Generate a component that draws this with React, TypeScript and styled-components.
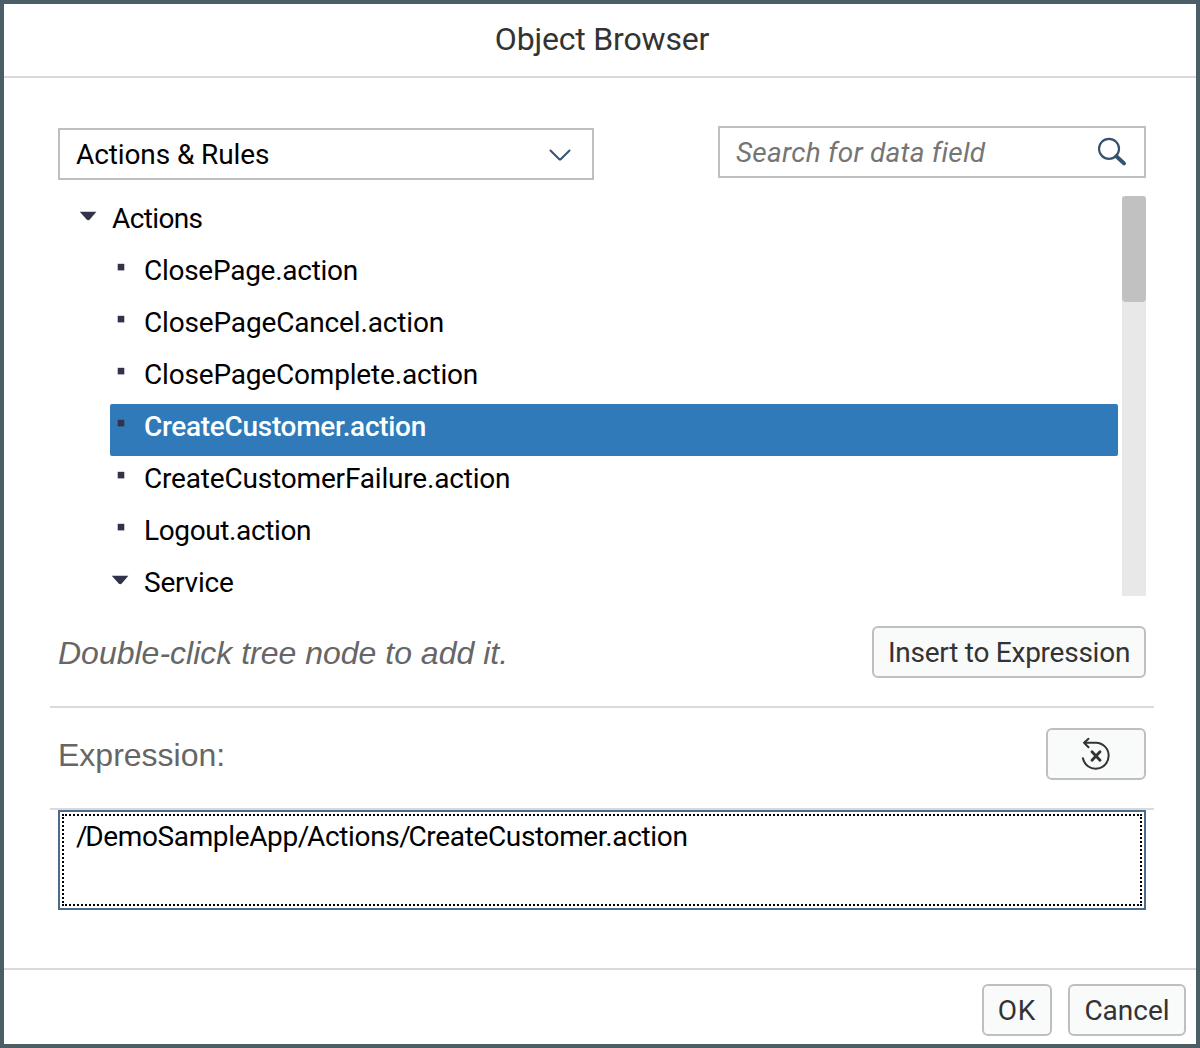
import React from "react";
import styled, { createGlobalStyle } from "styled-components";

const GlobalStyle = createGlobalStyle`
  * { box-sizing: border-box; }
  body { margin: 0; background: #fff; font-family: Roboto, "Noto Sans", sans-serif; }
`;

const Dialog = styled.div`
  width: 1200px;
  height: 1048px;
  border: 4px solid #4b5e66;
  background: #fff;
  display: flex;
  flex-direction: column;
  overflow: hidden;
`;

const Label = styled.span<{ $track?: number }>`
  white-space: pre;
  letter-spacing: ${(p) => p.$track ?? 0}px;
`;

const Header = styled.header`
  height: 74px;
  flex: none;
  border-bottom: 2px solid #d9d9d9;
  display: flex;
  justify-content: center;
  padding: 15px 0 0 4px;
  font-size: 32px;
  line-height: 40px;
  color: #333;
`;

const Body = styled.main`
  height: 890px;
  flex: none;
  padding: 48px 42px 0 46px;
  display: flex;
  flex-direction: column;
`;

const FilterRow = styled.div`
  display: flex;
  justify-content: space-between;
  align-items: flex-start;
  height: 70px;
  padding: 0 8px;
`;

const Field = styled.div<{ $width: number; $drop?: number; $end: number }>`
  width: ${(p) => p.$width}px;
  height: 52px;
  margin-top: ${(p) => p.$drop ?? 0}px;
  border: 2px solid #bfbfbf;
  display: flex;
  justify-content: space-between;
  padding: 0 ${(p) => p.$end}px 0 16px;
  font-size: 28px;
  line-height: 50px;
  color: #000;
`;

const Placeholder = styled(Label)`
  font-style: italic;
  color: #757575;
`;

const TreePane = styled.div`
  height: 400px;
  margin: 0 8px;
  display: flex;
  justify-content: space-between;
`;

const Tree = styled.div`
  width: 1060px;
  height: 400px;
`;

const Row = styled.div<{ $level: number; $selected?: boolean }>`
  height: 52px;
  margin-left: ${(p) => 20 + p.$level * 32}px;
  border-radius: 2px;
  display: flex;
  font-size: 28px;
  line-height: 45px;
  color: ${(p) => (p.$selected ? "#fff" : "#000")};
  font-weight: ${(p) => (p.$selected ? 500 : 400)};
  background: ${(p) => (p.$selected ? "#307aba" : "transparent")};
`;

const Marker = styled.svg`
  width: 34px;
  height: 52px;
  flex: none;
`;

const ScrollTrack = styled.div`
  width: 24px;
  height: 400px;
  background: #e8e8e8;
`;

const ScrollThumb = styled.div`
  height: 106px;
  border-radius: 4px;
  background: #c1c1c1;
`;

const ActionRow = styled.div<{ $height: number; $top: number }>`
  height: ${(p) => p.$height}px;
  flex: none;
  padding: ${(p) => p.$top}px 8px 0;
  border-bottom: 2px solid #d9d9de;
  display: flex;
  justify-content: space-between;
  align-items: flex-start;
`;

const Caption = styled(Label)<{ $italic?: boolean }>`
  font-family: "Liberation Sans", Arial, sans-serif;
  font-size: 32px;
  line-height: 54px;
  font-style: ${(p) => (p.$italic ? "italic" : "normal")};
  color: #666;
`;

const Button = styled.button<{ $width: number }>`
  width: ${(p) => p.$width}px;
  height: 52px;
  padding: 0;
  border: 2px solid #bfbfbf;
  border-radius: 6px;
  background: #f9fafa;
  display: flex;
  justify-content: center;
  font: 28px/50px Roboto, "Noto Sans", sans-serif;
  color: #333;
`;

const Expression = styled.div`
  height: 100px;
  margin: 0 8px;
  border: 2px solid #496b8c;
  padding: 2px;
`;

const FocusRing = styled.div`
  height: 92px;
  border: 2px dotted #000;
  padding: 0 12px;
  font-size: 28px;
  line-height: 42px;
  color: #000;
`;

const Slash = styled.span`
  letter-spacing: -2.4px;
`;

const Footer = styled.footer`
  height: 76px;
  flex: none;
  border-top: 2px solid #d9d9d9;
  display: flex;
  justify-content: flex-end;
  gap: 16px;
  padding: 14px 10px 0 0;
`;

const nodes = [
  { text: "Actions", level: 0, folder: true, track: -0.62 },
  { text: "ClosePage.action", level: 1, track: -0.27 },
  { text: "ClosePageCancel.action", level: 1, track: -0.16 },
  { text: "ClosePageComplete.action", level: 1, track: -0.18 },
  { text: "CreateCustomer.action", level: 1, selected: true, track: -0.3 },
  { text: "CreateCustomerFailure.action", level: 1, track: -0.18 },
  { text: "Logout.action", level: 1, track: -0.38 },
  { text: "Service", level: 1, folder: true, track: -0.2 },
];

const pathParts = ["DemoSampleApp", "Actions", "CreateCustomer.action"];

const NodeMarker = ({ folder }: { folder?: boolean }) => (
  <Marker viewBox="0 0 34 52">
    {folder ? (
      <path d="M1.800 15.800H18.400L12 23.200Q10.200 25.200 8.400 23.200Z" fill="#32324a" />
    ) : (
      <rect x="7.700" y="15.800" width="6.600" height="6.600" fill="#32324a" />
    )}
  </Marker>
);

const ChevronIcon = () => (
  <svg width="24" height="48" viewBox="0 0 24 48" fill="none" stroke="#35536f" strokeWidth="2" strokeLinecap="round" strokeLinejoin="round">
    <path d="M2.500 20.500L11.300 29.200Q12 29.900 12.700 29.200L21.500 20.500" />
  </svg>
);

const SearchIcon = () => (
  <svg width="32" height="48" viewBox="0 0 32 48" fill="none" stroke="#35536f" strokeLinecap="round">
    <circle cx="11" cy="20.800" r="10" strokeWidth="2.200" />
    <path d="M18.300 28.300L26 35.400" strokeWidth="4" />
  </svg>
);

const ResetIcon = () => (
  <svg width="32" height="48" viewBox="0 0 32 48" fill="none" stroke="#333" strokeLinecap="round" strokeLinejoin="round">
    <path d="M4 12.700H16A13 13 0 1 1 2.900 28.200M8.500 8.800L4 12.700L8.500 17.200" strokeWidth="2" />
    <path d="M12 21.800L20 30.200M20 21.800L12 30.200" strokeWidth="2.900" />
  </svg>
);

export default function App() {
  return (
    <>
      <GlobalStyle />
      <Dialog>
        <Header>
          <Label $track={-0.18}>Object Browser</Label>
        </Header>
        <Body>
          <FilterRow>
            <Field $width={536} $drop={2} $end={20}>
              <Label $track={-0.1}>Actions &amp; Rules</Label>
              <ChevronIcon />
            </Field>
            <Field $width={428} $end={14}>
              <Placeholder $track={0.24}>Search for data field</Placeholder>
              <SearchIcon />
            </Field>
          </FilterRow>
          <TreePane>
            <Tree>
              {nodes.map((n) => (
                <Row key={n.text} $level={n.level} $selected={n.selected}>
                  <NodeMarker folder={n.folder} />
                  <Label $track={n.track}>{n.text}</Label>
                </Row>
              ))}
            </Tree>
            <ScrollTrack>
              <ScrollThumb />
            </ScrollTrack>
          </TreePane>
          <ActionRow $height={112} $top={30}>
            <Caption $italic>Double-click tree node to add it.</Caption>
            <Button $width={274}>
              <Label $track={-0.25}>Insert to Expression</Label>
            </Button>
          </ActionRow>
          <ActionRow $height={102} $top={20}>
            <Caption>Expression:</Caption>
            <Button $width={100} aria-label="Reset expression">
              <ResetIcon />
            </Button>
          </ActionRow>
          <Expression>
            <FocusRing>
              <Label $track={-0.35}>
                {pathParts.map((part) => (
                  <React.Fragment key={part}>
                    <Slash>/</Slash>
                    {part}
                  </React.Fragment>
                ))}
              </Label>
            </FocusRing>
          </Expression>
        </Body>
        <Footer>
          <Button $width={70}>
            <Label $track={0.8}>OK</Label>
          </Button>
          <Button $width={118}>
            <Label>Cancel</Label>
          </Button>
        </Footer>
      </Dialog>
    </>
  );
}
